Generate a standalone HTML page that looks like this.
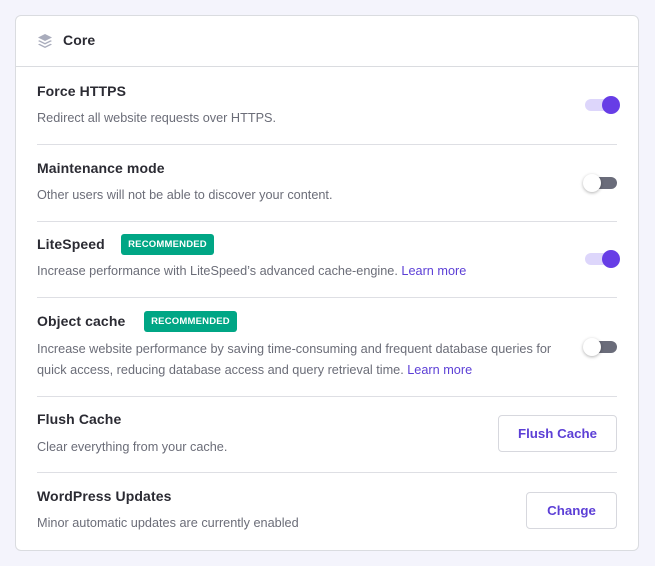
<!DOCTYPE html>
<html><head><meta charset="utf-8"><style>
*{margin:0;padding:0;box-sizing:border-box}
body{width:655px;height:566px;background:#f4f4fc;font-family:"Liberation Sans",sans-serif;position:relative;overflow:hidden}
.card{position:absolute;left:15px;top:15px;width:624px;height:536px;background:#fff;border:1px solid #dadce0;border-radius:6px}
.a{position:absolute}
.t{font-size:14px;font-weight:bold;color:#2b2b33;letter-spacing:0.1px}
.d{font-size:12.7px;color:#6b6d78;line-height:21px}
.d a{color:#5c3fd6;text-decoration:none}
.hr{position:absolute;left:37px;width:580px;height:1px;background:#dedfe4}
.badge{position:absolute;height:21px;background:#00a685;color:#fff;font-size:9.5px;font-weight:bold;border-radius:3px;line-height:21px;text-align:center;letter-spacing:0.2px}
.tr{position:absolute;width:32px;height:12px;border-radius:6px}
.on{background:#ddd6fb}
.off{background:#6a6c7a}
.k{position:absolute;width:18px;height:18px;border-radius:50%}
.kon{background:#673de6}
.koff{background:#fff;box-shadow:0 1px 3px rgba(0,0,0,.3)}
.btn{position:absolute;border:1px solid #d7d8de;border-radius:4px;background:#fff;color:#5c3fd6;font-size:13.3px;font-weight:bold;text-align:center}
</style></head><body>
<div class="card"></div>
<svg class="a" style="left:37px;top:33px" width="16" height="16" viewBox="0 0 16 16"><path d="M8 1L15 4.5 8 8 1 4.5Z" fill="#a9acbc"/><path d="M2.5 7.3L8 10 13.5 7.3 15 8 8 11.5 1 8Z" fill="#a9acbc"/><path d="M2.5 10.8L8 13.5 13.5 10.8 15 11.5 8 15 1 11.5Z" fill="#a9acbc"/></svg>
<div class="a t" style="left:63px;top:32px">Core</div>
<div class="a" style="left:16px;top:66px;width:622px;height:1px;background:#dadce0"></div>

<div class="a t" style="left:37px;top:83px">Force HTTPS</div>
<div class="a d" style="left:37px;top:108px">Redirect all website requests over HTTPS.</div>
<div class="tr on" style="left:585px;top:99px"></div><div class="k kon" style="left:602px;top:96px"></div>
<div class="hr" style="top:144px"></div>

<div class="a t" style="left:37px;top:160px">Maintenance mode</div>
<div class="a d" style="left:37px;top:185px">Other users will not be able to discover your content.</div>
<div class="tr off" style="left:585px;top:177px"></div><div class="k koff" style="left:583px;top:174px"></div>
<div class="hr" style="top:221px"></div>

<div class="a t" style="left:37px;top:236px">LiteSpeed</div>
<div class="badge" style="left:121px;top:234px;width:93px">RECOMMENDED</div>
<div class="a d" style="left:37px;top:261px">Increase performance with LiteSpeed’s advanced cache-engine. <a>Learn more</a></div>
<div class="tr on" style="left:585px;top:253px"></div><div class="k kon" style="left:602px;top:250px"></div>
<div class="hr" style="top:297px"></div>

<div class="a t" style="left:37px;top:313px">Object cache</div>
<div class="badge" style="left:144px;top:311px;width:93px">RECOMMENDED</div>
<div class="a d" style="left:37px;top:339px;width:545px">Increase website performance by saving time-consuming and frequent database queries for quick access, reducing database access and query retrieval time. <a>Learn more</a></div>
<div class="tr off" style="left:585px;top:341px"></div><div class="k koff" style="left:583px;top:338px"></div>
<div class="hr" style="top:396px"></div>

<div class="a t" style="left:37px;top:411px">Flush Cache</div>
<div class="a d" style="left:37px;top:437px">Clear everything from your cache.</div>
<div class="btn" style="left:498px;top:415px;width:119px;height:37px;line-height:35px">Flush Cache</div>
<div class="hr" style="top:472px"></div>

<div class="a t" style="left:37px;top:488px">WordPress Updates</div>
<div class="a d" style="left:37px;top:513px">Minor automatic updates are currently enabled</div>
<div class="btn" style="left:526px;top:492px;width:91px;height:37px;line-height:35px">Change</div>
</body></html>
